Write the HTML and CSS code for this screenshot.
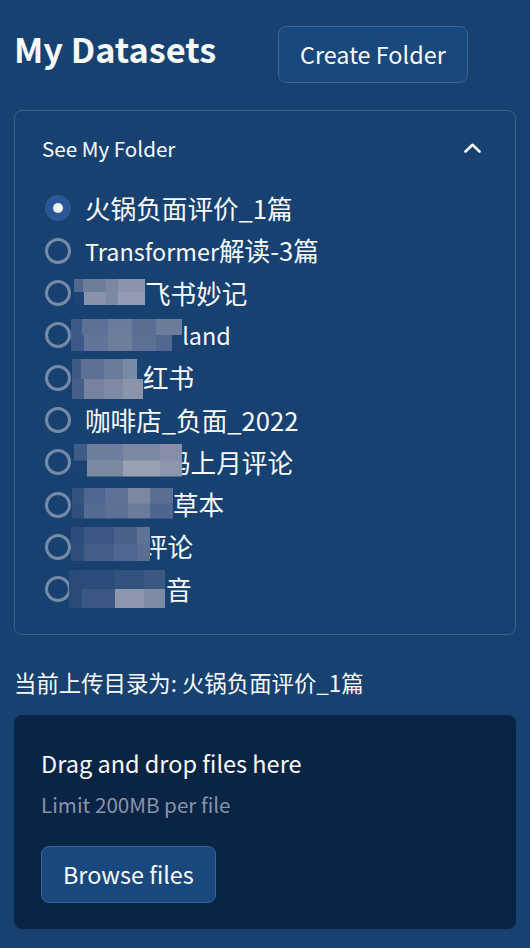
FILE: index.html
```html
<!DOCTYPE html>
<html lang="zh">
<head>
<meta charset="utf-8">
<title>My Datasets</title>
<link rel="stylesheet" href="styles.css">
</head>
<body>
<div class="sidebar">
  <div class="head">
    <h1 class="title">My Datasets</h1>
    <button class="btn btn-create">Create Folder</button>
  </div>

  <div class="expander">
    <div class="exp-head">
      <span>See My Folder</span>
      <svg class="chev" width="17" height="10" viewBox="0 0 17 10"><polyline points="1.5,8.5 8.5,1.8 15.5,8.5" fill="none" stroke="#fafafa" stroke-width="2.6" stroke-linecap="round" stroke-linejoin="round"/></svg>
    </div>
    <div class="radios">
      <div class="row"><span class="radio on"></span><span class="lbl">火锅负面评价_1篇</span></div>
      <div class="row"><span class="radio"></span><span class="lbl"><span class="lat">Transformer</span>解读-3篇</span></div>
      <div class="row"><span class="radio"></span><span class="mz m3"></span><span class="lbl">飞书妙记</span></div>
      <div class="row"><span class="radio"></span><span class="mz m4"></span><span class="lbl lat">yland</span></div>
      <div class="row"><span class="radio"></span><span class="mz m5"></span><span class="lbl">红书</span></div>
      <div class="row"><span class="radio"></span><span class="lbl">咖啡店_负面_2022</span></div>
      <div class="row"><span class="radio"></span><span class="mz m7"></span><span class="lbl">码上月评论</span></div>
      <div class="row"><span class="radio"></span><span class="mz m8"></span><span class="lbl">草本</span></div>
      <div class="row"><span class="radio"></span><span class="mz m9"></span><span class="lbl">评论</span></div>
      <div class="row"><span class="radio"></span><span class="mz m10"></span><span class="lbl">音</span></div>
    </div>
  </div>

  <p class="cur">当前上传目录为: 火锅负面评价_1篇</p>

  <div class="drop">
    <div class="drop-title">Drag and drop files here</div>
    <div class="drop-sub">Limit 200MB per file</div>
    <button class="btn btn-browse">Browse files</button>
  </div>
</div>
</body>
</html>
```

FILE: styles.css
```css
html, body {
  margin: 0;
  padding: 0;
}
body {
  width: 530px;
  min-height: 948px;
  background: #164170;
  font-family: "Noto Sans CJK SC", "Noto Sans", sans-serif;
  color: #fafafa;
  overflow: hidden;
}
.sidebar {
  width: 502px;
  padding: 0 14px;
}
.lat {
  font-size: 0.915em;
}

/* header */
.head {
  display: grid;
  grid-template-columns: 238px auto;
  column-gap: 26px;
  align-items: start;
  height: 110px;
  box-sizing: border-box;
  padding-top: 26px;
}
.title {
  margin: 0;
  font-size: 34.3px;
  font-weight: 700;
  line-height: 44px;
  white-space: nowrap;
}
.btn {
  font-family: inherit;
  color: #fafafa;
  background: #18487d;
  border: 1px solid #3d6491;
  border-radius: 8px;
  font-size: 23.4px;
  line-height: 41px;
  padding: 7px 21px;
  margin: 0;
  cursor: pointer;
  white-space: nowrap;
}
.btn-create {
  justify-self: start;
}

/* expander */
.expander {
  border: 1px solid rgba(250, 250, 250, 0.17);
  border-radius: 8px;
}
.exp-head {
  display: flex;
  justify-content: space-between;
  align-items: center;
  padding: 19.5px 34px 0 27px;
  font-size: 20.6px;
  line-height: 35.84px;
}
.chev {
  display: block;
  margin-top: 0;
}
.radios {
  padding: 21px 0 24px 30px;
}
.row {
  display: flex;
  align-items: center;
  height: 42.3px;
  font-size: 25.6px;
  line-height: 1.6;
  white-space: nowrap;
}
.radio {
  flex: none;
  width: 26px;
  height: 26px;
  box-sizing: border-box;
  border: 3px solid #768aa5;
  border-radius: 50%;
  margin-right: 14px;
}
.radio.on {
  border: none;
  background: #2b5797;
  display: flex;
  align-items: center;
  justify-content: center;
}
.radio.on::after {
  content: "";
  width: 10px;
  height: 10px;
  border-radius: 50%;
  background: #fafafa;
}

/* blurred mosaics */
.mz {
  flex: none;
  display: inline-block;
  position: relative;
  z-index: 1;
  background-repeat: no-repeat;
  background-size: 100% 50%;
  background-position: top, bottom;
}
.m3 {
  width: 71px; height: 26px; margin: -2px 0 0 -11px;
  background-image:
    linear-gradient(90deg, #4f6690 0 12%, #6d7d9a 12% 45%, #7a87a1 45% 62%, #8a94aa 62%),
    linear-gradient(90deg, #1c4474 0 14%, #8892a8 14% 45%, #7d89a2 45% 62%, #939cb0 62%);
}
.m4 {
  width: 111px; height: 32px; margin: 0 -12px 0 -14px;
  background-image:
    linear-gradient(90deg, #3c5a85 0 10%, #5d7095 10% 33%, #6b7c9c 33% 55%, #5a6e93 55% 77%, #6c7d9c 77%),
    linear-gradient(90deg, #3c5a85 0 12%, #62749a 12% 33%, #6e7f9e 33% 55%, #5d7196 55% 77%, #526890 77% 91%, #1a4372 91%);
}
.m5 {
  width: 71px; height: 40px; margin: 2px 0 0 -13px;
  background-image:
    linear-gradient(90deg, #3d5a85 0 12%, #5d7095 12% 45%, #6a7b9b 45% 72%, #788aa5 72% 92%, #1a4373 92%),
    linear-gradient(90deg, #455f89 0 17%, #75839f 17% 45%, #7e8aa3 45% 72%, #8a95ab 72%);
}
.m7 {
  width: 108px; height: 33px; margin: -4px -17px 0 -11px;
  background-image:
    linear-gradient(90deg, #3f5c86 0 12%, #6e7e9c 12% 45%, #7b88a2 45% 80%, #868fa7 80%),
    linear-gradient(90deg, #1a4373 0 12%, #7b88a2 12% 45%, #98a1b4 45% 80%, #8b95ab 80%);
}
.m8 {
  width: 101px; height: 31px; margin: -3px 0 0 -13px;
  background-image:
    linear-gradient(90deg, #34527e 0 12%, #4f6690 12% 33%, #5e7196 33% 55%, #7b88a2 55% 77%, #5a6e93 77%),
    linear-gradient(90deg, #30507c 0 12%, #566b92 12% 33%, #5c7095 33% 55%, #6a7b9b 55% 77%, #4e658f 77%);
}
.m9 {
  width: 79px; height: 34px; margin: -6px -8px 0 -14px;
  background-image:
    linear-gradient(90deg, #2c4d7b 0 17%, #3b5884 17% 55%, #4a6289 55% 83%, #5e7196 83%),
    linear-gradient(90deg, #2e4e7b 0 17%, #425e87 17% 55%, #4e6690 55% 83%, #5a6e93 83%);
}
.m10 {
  width: 96px; height: 38px; margin: 0 1px 0 -16px;
  background-image:
    linear-gradient(90deg, #2a4a77 0 14%, #2c4d7b 14% 48%, #34527e 48% 78%, #3c5983 78%),
    linear-gradient(90deg, #2a4a77 0 14%, #3b5884 14% 48%, #8d97ab 48% 78%, #7f8ba3 78%);
}

/* current dir */
.cur {
  margin: 29.3px 0 0 0;
  font-size: 22.4px;
  line-height: 35.84px;
}

/* drop zone */
.drop {
  margin-top: 15px;
  background: #0a2446;
  border-radius: 8px;
  padding: 27.4px 27px 26px;
}
.drop-title {
  font-size: 23.5px;
  line-height: 41px;
}
.drop-sub {
  margin-top: 3.5px;
  font-size: 20.6px;
  line-height: 35.84px;
  color: #8795a8;
}
.btn-browse {
  display: block;
  margin-top: 23.3px;
}
```
